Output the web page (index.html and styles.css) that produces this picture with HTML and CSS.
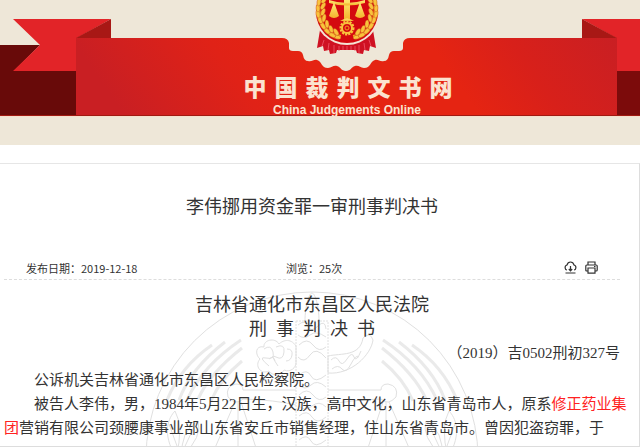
FILE: index.html
```html
<!DOCTYPE html>
<html lang="zh-CN">
<head>
    <meta charset="UTF-8">
    <meta name="viewport" content="width=device-width, initial-scale=1.0">
    <title>中国裁判文书网</title>
    <link rel="stylesheet" href="styles.css">
</head>
<body>
    <header class="banner">
        <svg class="banner-art" viewBox="0 0 640 145" preserveAspectRatio="xMidYMin slice" aria-hidden="true">
            <defs>
                <linearGradient id="band" x1="0" x2="1" y1="0.1" y2="0">
                    <stop offset="0" stop-color="#c91f23"/>
                    <stop offset="0.25" stop-color="#e02217"/>
                    <stop offset="0.4" stop-color="#e52412"/>
                    <stop offset="0.65" stop-color="#e52412"/>
                    <stop offset="0.8" stop-color="#d8201a"/>
                    <stop offset="1" stop-color="#c91f23"/>
                </linearGradient>
                <linearGradient id="gold" x1="0" x2="0" y1="0" y2="1">
                    <stop offset="0" stop-color="#fff07a"/>
                    <stop offset="1" stop-color="#f4b32c"/>
                </linearGradient>
                <!-- 麦穗 -->
                <g id="wheat">
                    <path d="M341 36 C326 34 318 22 319 0" fill="none" stroke="#f6a821" stroke-width="2"/>
                    <g fill="#f9c33c" stroke="#c43a12" stroke-width="0.4">
                        <ellipse cx="337" cy="37" rx="4" ry="2" transform="rotate(15 337 37)"/>
                        <ellipse cx="332" cy="35" rx="4" ry="2" transform="rotate(30 332 35)"/>
                        <ellipse cx="327" cy="31" rx="4" ry="2" transform="rotate(45 327 31)"/>
                        <ellipse cx="323" cy="26" rx="4" ry="2" transform="rotate(55 323 26)"/>
                        <ellipse cx="320" cy="20" rx="4" ry="2" transform="rotate(68 320 20)"/>
                        <ellipse cx="318" cy="14" rx="4" ry="2" transform="rotate(80 318 14)"/>
                        <ellipse cx="318" cy="8" rx="4" ry="2" transform="rotate(90 318 8)"/>
                        <ellipse cx="319" cy="2" rx="4" ry="2" transform="rotate(100 319 2)"/>
                        <ellipse cx="336" cy="32" rx="4" ry="2" transform="rotate(55 336 32)"/>
                        <ellipse cx="331" cy="29" rx="4" ry="2" transform="rotate(70 331 29)"/>
                        <ellipse cx="327" cy="24" rx="4" ry="2" transform="rotate(85 327 24)"/>
                        <ellipse cx="324" cy="18" rx="4" ry="2" transform="rotate(100 324 18)"/>
                        <ellipse cx="323" cy="12" rx="4" ry="2" transform="rotate(110 323 12)"/>
                        <ellipse cx="323" cy="6" rx="4" ry="2" transform="rotate(120 323 6)"/>
                        <ellipse cx="324" cy="0" rx="4" ry="2" transform="rotate(125 324 0)"/>
                    </g>
                </g>
            </defs>

            <polygon points="0,45 40,45 14,71 77,71 77,116 0,116" fill="#680a09"/>
            <rect x="616" y="71" width="24" height="45" fill="#7c0b0b"/>
            <polygon points="13,19 111,19 77,38 77,71 13,71 40,45" fill="#e22428"/>
            <polygon points="111,19 111,38 76,38" fill="#a81815"/>
            <polygon points="582,19 640,19 640,71 616,71 616,38" fill="#e22428"/>
            <polygon points="582,19 582,38 617,38" fill="#a81815"/>
            <path d="M76 38 H282 Q288 38 289 43 V48 Q289 51 293 51 H298 Q302 51 303 55 Q304 61 308 61 C312 62 314 59 317 60 C322 61 321 68 328 68 C332 68 333 65 337 66 C341 67 341 71 346 71 C351 71 351 67 355 66 C359 65 360 68 364 68 C371 68 370 61 375 60 C378 59 380 62 384 61 Q388 61 389 55 Q390 51 394 51 H399 Q403 51 403 48 V43 Q404 38 410 38 H617 V116 H76 Z" fill="url(#band)"/>
            <rect y="115" width="640" height="1" fill="#a01a12"/>
            <rect y="116" width="640" height="1" fill="#f6dfcd"/>

            <!-- 徽章 -->
            <path d="M320 30 L317 48 L323 46 L324 51 L329 50 L330 54 L336 53 L337 50 H356 L357 53 L363 54 L364 50 L369 51 L370 46 L376 48 L373 30 Z" fill="#cf1122"/>
            <path d="M324 40 L322 46 M329 43 L328 50 M334 45 V53 M369 40 L371 46 M364 43 L365 50 M359 45 V53 M339 46 V51 M343 46 V50 M347 46 V50 M351 46 V50 M355 46 V51" stroke="#f0586a" stroke-width="0.8"/>
            <circle cx="347" cy="12" r="33" fill="#f4e4d5"/>
            <circle cx="347" cy="12" r="31" fill="#d4090f"/>
            <use href="#wheat"/>
            <use href="#wheat" transform="translate(694 0) scale(-1 1)"/>
            <g fill="url(#gold)">
                <rect x="344" y="-4" width="6" height="24"/>
                <path d="M329 0 Q347 6 365 0 V3 Q347 8 329 3 Z"/>
                <path d="M334 2 L339 16 Q334 20 329 16 Z"/>
                <path d="M360 2 L365 16 Q360 20 355 16 Z"/>
                <path d="M340 21 Q347 16 354 21 Z"/>
            </g>
            <circle cx="347" cy="28" r="6" fill="none" stroke="#f9c33c" stroke-width="3" stroke-dasharray="2 1"/>
            <circle cx="347" cy="28" r="5" fill="#d4090f" stroke="#f9c33c" stroke-width="2"/>
            <circle cx="347" cy="28" r="2" fill="none" stroke="#f49a22" stroke-width="1"/>
        </svg>
        <div class="brand">
            <p class="brand-cn">中国裁判文书网</p>
            <p class="brand-en">China Judgements Online</p>
        </div>
    </header>

    <main class="sheet">
        <h1 class="doc-title">李伟挪用资金罪一审刑事判决书</h1>

        <div class="meta">
            <span>发布日期：2019-12-18</span>
            <span>浏览：25次</span>
            <div class="tools">
                <button type="button" class="tool" aria-label="下载">
                    <svg viewBox="0 0 13 13">
                        <path d="M3 9 C1 9 0 5 3 4 C4 0 9 0 10 4 C13 5 12 9 10 9"/>
                        <path d="M6.5 5 V9.5 M4.8 8 L6.5 9.8 L8.2 8 M1.5 12 H11.5"/>
                    </svg>
                </button>
                <button type="button" class="tool" aria-label="打印">
                    <svg viewBox="0 0 13 13">
                        <path d="M3 4 V1 H10 V4 M3 10 H1.8 Q0.8 10 0.8 9 V5 Q0.8 4 1.8 4 H11.2 Q12.2 4 12.2 5 V9 Q12.2 10 11.2 10 H10 M3 7 H10 V12.2 H3 Z M9 5.5 H10.5"/>
                    </svg>
                </button>
            </div>
        </div>

        <article class="judgement">
            <svg class="watermark" viewBox="0 0 334 166" aria-hidden="true">
                <g fill="none" stroke="#e0e0e0">
                    <circle cx="167" cy="167" r="166"/>
                    <path d="M160 30 C160 15 164 2 167 2 C170 2 174 15 174 30"/>
                    <path d="M151 30 H183 V166 M151 30 V166" stroke-dasharray="2 1"/>
                    <!-- 华表云纹 -->
                    <path d="M153 34 q7 -6 10 1 t10 0 t8 3 M153 44 q6 5 12 0 t16 2 M154 54 q8 -8 14 0 t13 2 M153 66 q6 7 12 -2 t16 3 M154 84 q8 -7 12 1 t15 -1 M154 94 q6 6 12 0 t15 2 M154 104 q8 -8 14 0 t13 2 M154 115 q6 6 13 0 t14 1 M154 125 q8 -7 13 1 t14 0 M154 137 q6 6 12 0 t15 2 M154 149 q8 -7 12 1 t15 -1 M154 160 q6 5 12 0 t15 1"/>
                    <path d="M151 55 C145 46 137 50 134 53 C130 46 118 49 119 56 C110 54 110 64 115 68 C109 75 116 84 124 80 C128 86 137 84 139 79 C146 82 151 76 151 72 Z"/>
                    <path d="M119 58 q7 -5 9 3 t-7 6 t3 8 M131 56 q9 -4 8 5 t-8 5 t2 9 M142 58 q6 0 5 6 t-6 6 M124 68 q5 -4 6 2"/>
                    <path d="M183 65 C196 62 215 66 218 47 Q225 40 228 49 C226 64 206 84 183 82 Z"/>
                    <path d="M186 69 q5 -5 8 1 t8 -2 t7 -2 t7 -6 M187 78 q6 -5 10 0 t9 -5 t8 -7"/>
                    <path d="M151 99 H98 Q98 93 91 93 Q80 95 83 106 Q91 115 98 108 Q130 109 151 114 M183 99 H236 Q236 93 243 93 Q254 95 251 106 Q243 115 236 108 Q204 109 183 114"/>
                    <path d="M90 111 L66 166 M93 111 V166 M96 111 L114 166 M244 111 L268 166 M241 111 V166 M238 111 L220 166"/>
                    <path d="M31 166 C16 142 24 126 30 120 Q39 136 31 166 M37 166 Q35 140 53 130 Q58 145 37 166 M24 133 L36 166 M49 136 L35 166 M303 166 C318 142 310 126 304 120 Q295 136 303 166 M297 166 Q299 140 281 130 Q276 145 297 166 M310 133 L298 166 M285 136 L299 166"/>
                </g>
                <g fill="none" stroke="#eaeaea" stroke-width="3">
                    <path id="rays" d="M67 54 Q36 75 22 109 M80 51 Q46 77 34 109 M96 49 Q58 74 42 109 M97 57 Q65 82 53 108 M97 70 Q75 88 66 110"/>
                    <use href="#rays" transform="translate(334 0) scale(-1 1)"/>
                </g>
            </svg>
            <h2 class="court">吉林省通化市东昌区人民法院</h2>
            <h2 class="court">刑&ensp;事&ensp;判&ensp;决&ensp;书</h2>
            <p class="case-no">（2019）吉0502刑初327号</p>
            <p>公诉机关吉林省通化市东昌区人民检察院。</p>
            <p>被告人李伟，男，1984年5月22日生，汉族，高中文化，山东省青岛市人，原系<mark>修正药业集团</mark>营销有限公司颈腰康事业部山东省安丘市销售经理，住山东省青岛市。曾因犯盗窃罪，于</p>
        </article>
    </main>
</body>
</html>
```
FILE: styles.css
```css
* {
    box-sizing: border-box;
}

body {
    margin: 0;
    background: #fff;
    color: #333;
    font-family: 'Noto Sans CJK SC', sans-serif;
}

h1, h2, p {
    margin: 0;
    font-weight: normal;
}

.banner {
    display: grid;
    height: 145px;
    background: #eee7d8;
    overflow: hidden;
}

.banner-art,
.brand {
    grid-area: 1 / 1;
}

.banner-art {
    width: 100%;
    height: 145px;
}

.brand {
    padding: 69px 0 0 64px;
    color: #fbe3d0;
    text-align: center;
}

.brand-cn {
    font-size: 23px;
    line-height: 34px;
    font-weight: 900;
    letter-spacing: 8px;
}

.brand-en {
    padding-right: 10px;
    font-family: 'Liberation Sans', Arial, sans-serif;
    font-size: 12px;
    line-height: 14px;
    font-weight: bold;
}

.sheet {
    margin: 18px 0 0;
    padding: 0 11px 0 4px;
    border-top: 1px solid #e6e6e6;
    border-right: 1px solid #ddd;
    border-bottom: 1px solid #ddd;
}

.doc-title {
    padding: 27px 8px 0 0;
    font-size: 18px;
    line-height: 28px;
    text-align: center;
}

.meta {
    display: grid;
    grid-template-columns: 260px 1fr auto;
    align-items: center;
    margin: 37px 8px 0 0;
    padding: 0 22px;
    height: 24px;
    border-bottom: 1px dashed #ddd;
    font-size: 11px;
    line-height: 20px;
}

.tools {
    display: flex;
    gap: 8px;
}

.tool {
    width: 13px;
    height: 13px;
    padding: 0;
    border: 0;
    background: none;
    cursor: pointer;
}

.tool svg {
    display: block;
    fill: none;
    stroke: #333;
    stroke-width: 1.2;
}

.judgement {
    position: relative;
    padding: 13px 0 6px;
    font-family: 'Liberation Serif', 'Noto Sans CJK SC', serif;
    font-size: 15px;
    line-height: 24px;
    overflow: hidden;
}

.watermark {
    position: absolute;
    top: 11px;
    left: 50%;
    width: 334px;
    margin-left: -171px;
    z-index: -1;
}

.judgement p {
    text-indent: 2em;
}

.judgement .court {
    padding-right: 8px;
    font-size: 18px;
    line-height: 24px;
    text-align: center;
}

.judgement .case-no {
    margin-bottom: 3px;
    padding-right: 8px;
    text-align: right;
    text-indent: 0;
}

mark {
    background: none;
    color: #f22;
}
```
